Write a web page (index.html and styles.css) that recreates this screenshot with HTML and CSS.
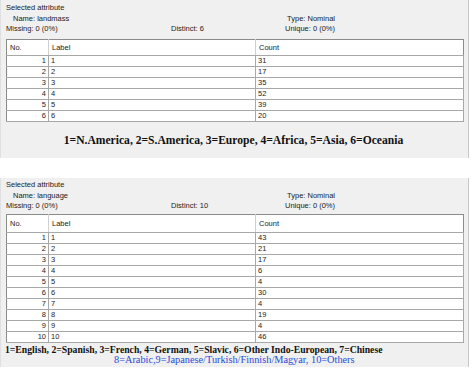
FILE: index.html
```html
<!DOCTYPE html>
<html lang="en">
<head>
  <meta charset="UTF-8" />
  <title>Selected attribute</title>
  <link rel="stylesheet" href="styles.css">
</head>
<body>

<section class="panel panel-first">
  <div class="legend">Selected attribute</div>
  <div class="info">
    <span class="name">Name: landmass</span>
    <span></span>
    <span class="right">Type: Nominal</span>
    <span>Missing: 0 (0%)</span>
    <span>Distinct: 6</span>
    <span class="right">Unique: 0 (0%)</span>
  </div>
  <table class="values">
    <tr><th class="no">No.</th><th>Label</th><th>Count</th></tr>
    <tr><td class="no">1</td><td>1</td><td>31</td></tr>
    <tr><td class="no">2</td><td>2</td><td>17</td></tr>
    <tr><td class="no">3</td><td>3</td><td>35</td></tr>
    <tr><td class="no">4</td><td>4</td><td>52</td></tr>
    <tr><td class="no">5</td><td>5</td><td>39</td></tr>
    <tr><td class="no">6</td><td>6</td><td>20</td></tr>
  </table>
  <p class="note note-center">1=N.America, 2=S.America, 3=Europe, 4=Africa, 5=Asia, 6=Oceania</p>
</section>

<section class="panel panel-second">
  <div class="legend">Selected attribute</div>
  <div class="info">
    <span class="name">Name: language</span>
    <span></span>
    <span class="right">Type: Nominal</span>
    <span>Missing: 0 (0%)</span>
    <span>Distinct: 10</span>
    <span class="right">Unique: 0 (0%)</span>
  </div>
  <table class="values">
    <tr><th class="no">No.</th><th>Label</th><th>Count</th></tr>
    <tr><td class="no">1</td><td>1</td><td>43</td></tr>
    <tr><td class="no">2</td><td>2</td><td>21</td></tr>
    <tr><td class="no">3</td><td>3</td><td>17</td></tr>
    <tr><td class="no">4</td><td>4</td><td>6</td></tr>
    <tr><td class="no">5</td><td>5</td><td>4</td></tr>
    <tr><td class="no">6</td><td>6</td><td>30</td></tr>
    <tr><td class="no">7</td><td>7</td><td>4</td></tr>
    <tr><td class="no">8</td><td>8</td><td>19</td></tr>
    <tr><td class="no">9</td><td>9</td><td>4</td></tr>
    <tr><td class="no">10</td><td>10</td><td>46</td></tr>
  </table>
  <p class="note note-small">1=English, 2=Spanish, 3=French, 4=German, 5=Slavic, 6=Other Indo-European, 7=Chinese<br>
    <span class="blue">8=Arabic,9=Japanese/Turkish/Finnish/Magyar, 10=Others</span></p>
</section>

</body>
</html>
```

FILE: styles.css
```css
body {
  margin: 0;
  background: #ffffff;
  font-family: "Liberation Sans", Arial, sans-serif;
  font-size: 7.5px;
  color: #222;
  width: 472px;
}
.panel {
  background-color: #f0f0f0;
  border-right: 1px solid #c8c8c8;
  border-left: 1px solid #e0e0e0;
  margin-right: 3px;
  padding: 2px 6px 0 4px;
}
.panel-first {
  height: 156px;
}
.panel-second {
  margin-top: 20px;
  height: 188px;
  padding-top: 1px;
}
.legend {
  line-height: 12px;
  height: 12px;
  padding-left: 1px;
}
.info {
  display: grid;
  grid-template-columns: 165px 100px 64px;
  line-height: 10px;
  padding-left: 1px;
}
.info .name {
  padding-left: 7px;
}
.info .right {
  text-align: right;
}
.values {
  border-collapse: collapse;
  width: 458px;
  margin-top: 5px;
  margin-left: 1px;
  background: #ffffff;
  border: 1px solid #8c8c8c;
  table-layout: fixed;
}
.panel-second .values {
  margin-top: 3px;
}
.values th {
  font-weight: normal;
  text-align: left;
  height: 15px;
  padding: 0 3px;
  border-bottom: 1px solid #a8a8a8;
}
.panel-second .values th {
  height: 17px;
}
.values th:first-child {
  width: 35px;
  border-right: 1px solid #d0d0d0;
}
.values th:nth-child(2) {
  width: 200px;
  border-right: 1px solid #d0d0d0;
}
.values td {
  height: 10px;
  line-height: 10px;
  padding: 0 2px;
  border-bottom: 1px solid #a8a8a8;
  border-right: 1px solid #a8a8a8;
}
.values td.no {
  text-align: right;
}
.note {
  margin: 0;
  font-family: "Liberation Serif", "Times New Roman", serif;
  font-weight: bold;
  color: #111;
}
.note-center {
  text-align: center;
  font-size: 11.6px;
  padding-top: 12px;
}
.note-small {
  font-size: 9.7px;
  line-height: 10px;
  padding-top: 2px;
}
.blue {
  display: inline-block;
  padding-left: 109px;
  font-size: 10.3px;
  color: #2a4bd7;
  font-weight: normal;
}
```
